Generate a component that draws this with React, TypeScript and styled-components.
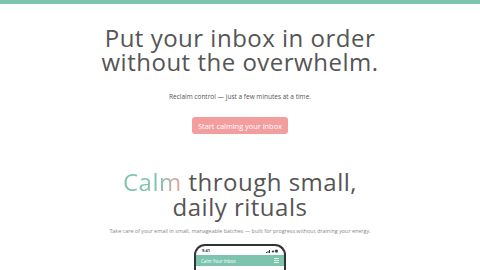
import styled, { createGlobalStyle } from 'styled-components';

const GlobalStyle = createGlobalStyle`
  html, body {
    margin: 0;
    padding: 0;
    background: #ffffff;
    font-family: 'Open Sans', 'Liberation Sans', sans-serif;
    color: #555555;
  }
`;

const TopBar = styled.div`
  height: 4px;
  background: #7cc4ae;
`;

const Hero = styled.section`
  display: flex;
  flex-direction: column;
  align-items: center;
  text-align: center;
  padding-top: 22px;
`;

const Title = styled.h1`
  margin: 0;
  font-size: 24px;
  line-height: 24px;
  font-weight: 500;
  color: #555555;
  letter-spacing: 0.5px;
`;

const Lead = styled.p`
  margin: 18px 0 0;
  font-size: 6.5px;
  color: #555555;
`;

const CtaButton = styled.button`
  margin-top: 16px;
  height: 17px;
  padding: 0 6px;
  border: none;
  border-radius: 3px;
  background: #f49d9f;
  color: #ffffff;
  font-family: 'Open Sans', sans-serif;
  font-size: 7.4px;
`;

const Section = styled.section`
  display: flex;
  flex-direction: column;
  align-items: center;
  text-align: center;
  padding-top: 35px;
`;

const SubTitle = styled.h2`
  margin: 0;
  font-size: 24px;
  line-height: 25px;
  font-weight: 500;
  color: #555555;
  letter-spacing: 0.5px;
`;

const Accent = styled.span`
  background: linear-gradient(90deg, #7cc4ae 0%, #7cc4ae 60%, #f49d9f 100%);
  -webkit-background-clip: text;
  background-clip: text;
  color: transparent;
`;

const Blurb = styled.p`
  margin: 8px 0 0;
  font-size: 5.4px;
  color: #888888;
`;

const Phone = styled.div`
  margin-top: 9px;
  width: 88px;
  height: 60px;
  border: 2px solid #333333;
  border-bottom: none;
  border-radius: 11px 11px 0 0;
  overflow: hidden;
  background: #ffffff;
`;

const StatusBar = styled.div`
  display: flex;
  justify-content: space-between;
  align-items: center;
  height: 9px;
  padding: 0 6px;
  font-size: 4px;
  font-weight: 700;
  color: #333333;
`;

const AppHeader = styled.div`
  display: flex;
  justify-content: space-between;
  align-items: center;
  height: 11px;
  padding: 0 5px;
  background: #7cc4ae;
  color: #ffffff;
  font-size: 4.5px;
`;

const Burger = styled.div`
  display: flex;
  flex-direction: column;
  gap: 1px;
  span {
    display: block;
    width: 5px;
    height: 1px;
    background: #ffffff;
    opacity: 0.8;
  }
`;

export default function App() {
  return (
    <>
      <GlobalStyle />
      <TopBar />
      <Hero>
        <Title>
          Put your inbox in order
          <br />
          without the overwhelm.
        </Title>
        <Lead>Reclaim control — just a few minutes at a time.</Lead>
        <CtaButton>Start calming your inbox</CtaButton>
      </Hero>
      <Section>
        <SubTitle>
          <Accent>Calm</Accent> through small,
          <br />
          daily rituals
        </SubTitle>
        <Blurb>
          Take care of your email in small, manageable batches — built for progress without draining your energy.
        </Blurb>
        <Phone>
          <StatusBar>
            <span>9:41</span>
            <svg width="12" height="4" viewBox="0 0 12 4">
              <rect x="0" y="3" width="1" height="1" fill="#333" />
              <rect x="1.5" y="2" width="1" height="2" fill="#333" />
              <rect x="3" y="1" width="1" height="3" fill="#333" />
              <path d="M5.5 2.2 Q7 0.6 8.5 2.2 L7 3.8 Z" fill="#333" />
              <rect x="9.2" y="0.8" width="2.6" height="2.6" rx="0.4" fill="#333" />
            </svg>
          </StatusBar>
          <AppHeader>
            <span>Calm Your Inbox</span>
            <Burger>
              <span />
              <span />
              <span />
            </Burger>
          </AppHeader>
        </Phone>
      </Section>
    </>
  );
}
